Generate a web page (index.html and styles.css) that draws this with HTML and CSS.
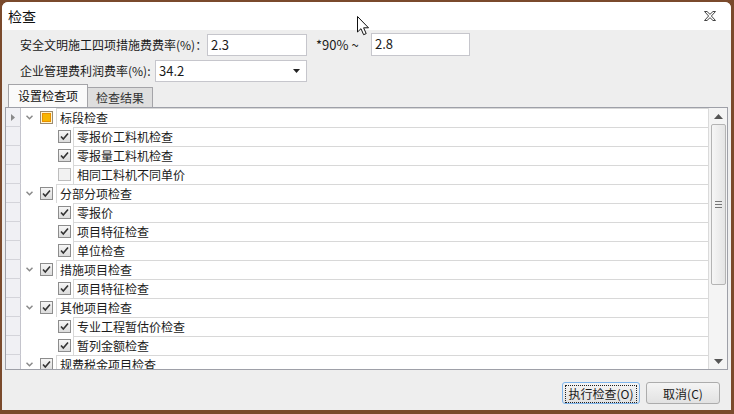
FILE: index.html
```html
<!DOCTYPE html>
<html lang="zh">
<head>
  <meta charset="UTF-8">
  <title>检查</title>
  <link rel="stylesheet" href="styles.css">
</head>
<body>
  <div class="window">
    <div class="titlebar">
      <span class="title">检查</span>
      <svg class="close" width="12" height="10" viewBox="0 0 12 10"><polygon points="0.5,0.5 3,0.5 6,3.3 9,0.5 11.5,0.5 7.4,5 11.5,9.5 9,9.5 6,6.7 3,9.5 0.5,9.5 4.6,5" fill="#fff" stroke="#444"/></svg>
    </div>

    <div class="form">
      <div class="form-row first">
        <label class="lbl lbl-a">安全文明施工四项措施费费率(%)：</label>
        <div class="input w100">2.3</div>
        <span class="mult">*90% ~</span>
        <div class="input w99 tall">2.8</div>
      </div>
      <div class="form-row">
        <label class="lbl lbl-b">企业管理费利润费率(%):</label>
        <div class="input combo">34.2<svg class="drop" width="7" height="4" viewBox="0 0 7 4"><polygon points="0,0 7,0 3.5,4" fill="#222"/></svg></div>
      </div>
    </div>

    <div class="tabs">
      <div class="tab active">设置检查项</div>
      <div class="tab">检查结果</div>
    </div>

    <div class="grid">
      <div class="rows">
        <div class="row parent"><div class="rh"><svg width="4" height="7" viewBox="0 0 4 7"><polygon points="0,0 4,3.5 0,7" fill="#8a8a8a"/></svg></div><div class="lead"><svg class="chev" width="7" height="5" viewBox="0 0 7 5"><polyline points="0.5,0.8 3.5,3.8 6.5,0.8" fill="none" stroke="#8a8a8a" stroke-width="1.5"/></svg><span class="cb mixed"><i></i></span></div><div class="cell">标段检查</div></div>
        <div class="row child"><div class="rh"></div><div class="lead"><span class="cb on"><svg width="11" height="11" viewBox="0 0 11 11"><polyline points="2,5.5 4.3,8 9,2.5" fill="none" stroke="#333" stroke-width="1.6"/></svg></span></div><div class="cell">零报价工料机检查</div></div>
        <div class="row child"><div class="rh"></div><div class="lead"><span class="cb on"><svg width="11" height="11" viewBox="0 0 11 11"><polyline points="2,5.5 4.3,8 9,2.5" fill="none" stroke="#333" stroke-width="1.6"/></svg></span></div><div class="cell">零报量工料机检查</div></div>
        <div class="row child"><div class="rh"></div><div class="lead"><span class="cb off"></span></div><div class="cell">相同工料机不同单价</div></div>
        <div class="row parent"><div class="rh"></div><div class="lead"><svg class="chev" width="7" height="5" viewBox="0 0 7 5"><polyline points="0.5,0.8 3.5,3.8 6.5,0.8" fill="none" stroke="#8a8a8a" stroke-width="1.5"/></svg><span class="cb on"><svg width="11" height="11" viewBox="0 0 11 11"><polyline points="2,5.5 4.3,8 9,2.5" fill="none" stroke="#333" stroke-width="1.6"/></svg></span></div><div class="cell">分部分项检查</div></div>
        <div class="row child"><div class="rh"></div><div class="lead"><span class="cb on"><svg width="11" height="11" viewBox="0 0 11 11"><polyline points="2,5.5 4.3,8 9,2.5" fill="none" stroke="#333" stroke-width="1.6"/></svg></span></div><div class="cell">零报价</div></div>
        <div class="row child"><div class="rh"></div><div class="lead"><span class="cb on"><svg width="11" height="11" viewBox="0 0 11 11"><polyline points="2,5.5 4.3,8 9,2.5" fill="none" stroke="#333" stroke-width="1.6"/></svg></span></div><div class="cell">项目特征检查</div></div>
        <div class="row child"><div class="rh"></div><div class="lead"><span class="cb on"><svg width="11" height="11" viewBox="0 0 11 11"><polyline points="2,5.5 4.3,8 9,2.5" fill="none" stroke="#333" stroke-width="1.6"/></svg></span></div><div class="cell">单位检查</div></div>
        <div class="row parent"><div class="rh"></div><div class="lead"><svg class="chev" width="7" height="5" viewBox="0 0 7 5"><polyline points="0.5,0.8 3.5,3.8 6.5,0.8" fill="none" stroke="#8a8a8a" stroke-width="1.5"/></svg><span class="cb on"><svg width="11" height="11" viewBox="0 0 11 11"><polyline points="2,5.5 4.3,8 9,2.5" fill="none" stroke="#333" stroke-width="1.6"/></svg></span></div><div class="cell">措施项目检查</div></div>
        <div class="row child"><div class="rh"></div><div class="lead"><span class="cb on"><svg width="11" height="11" viewBox="0 0 11 11"><polyline points="2,5.5 4.3,8 9,2.5" fill="none" stroke="#333" stroke-width="1.6"/></svg></span></div><div class="cell">项目特征检查</div></div>
        <div class="row parent"><div class="rh"></div><div class="lead"><svg class="chev" width="7" height="5" viewBox="0 0 7 5"><polyline points="0.5,0.8 3.5,3.8 6.5,0.8" fill="none" stroke="#8a8a8a" stroke-width="1.5"/></svg><span class="cb on"><svg width="11" height="11" viewBox="0 0 11 11"><polyline points="2,5.5 4.3,8 9,2.5" fill="none" stroke="#333" stroke-width="1.6"/></svg></span></div><div class="cell">其他项目检查</div></div>
        <div class="row child"><div class="rh"></div><div class="lead"><span class="cb on"><svg width="11" height="11" viewBox="0 0 11 11"><polyline points="2,5.5 4.3,8 9,2.5" fill="none" stroke="#333" stroke-width="1.6"/></svg></span></div><div class="cell">专业工程暂估价检查</div></div>
        <div class="row child"><div class="rh"></div><div class="lead"><span class="cb on"><svg width="11" height="11" viewBox="0 0 11 11"><polyline points="2,5.5 4.3,8 9,2.5" fill="none" stroke="#333" stroke-width="1.6"/></svg></span></div><div class="cell">暂列金额检查</div></div>
        <div class="row parent"><div class="rh"></div><div class="lead"><svg class="chev" width="7" height="5" viewBox="0 0 7 5"><polyline points="0.5,0.8 3.5,3.8 6.5,0.8" fill="none" stroke="#8a8a8a" stroke-width="1.5"/></svg><span class="cb on"><svg width="11" height="11" viewBox="0 0 11 11"><polyline points="2,5.5 4.3,8 9,2.5" fill="none" stroke="#333" stroke-width="1.6"/></svg></span></div><div class="cell">规费税金项目检查</div></div>
      </div>
      <div class="scrollbar">
        <svg class="arrow" width="9" height="5" viewBox="0 0 9 5"><polygon points="0,5 9,5 4.5,0" fill="#555"/></svg>
        <div class="thumb"><span class="grip"></span></div>
        <div class="track"></div>
        <svg class="arrow" width="9" height="5" viewBox="0 0 9 5"><polygon points="0,0 9,0 4.5,5" fill="#555"/></svg>
      </div>
    </div>

    <div class="footer">
      <button class="btn default"><span>执行检查(O)</span></button>
      <button class="btn">取消(C)</button>
    </div>
  </div>

  <svg class="cursor" width="13" height="20" viewBox="0 0 13 20"><path d="M0.5 0.5 L0.5 16 L4 12.7 L6.6 18.7 L9.2 17.6 L6.6 11.8 L11.5 11.8 Z" fill="#fff" stroke="#111"/></svg>
</body>
</html>
```

FILE: styles.css
```css
html, body { margin: 0; padding: 0; }
body { background: #7a4a2c; padding: 2px 3px 4px 2px; height: 414px; box-sizing: border-box; font-family: "Noto Sans CJK SC", "Microsoft YaHei", sans-serif; font-size: 12px; color: #1a1a1a; position: relative; white-space: nowrap; }
.window { background: #eeeeee; height: 408px; border-radius: 6px 6px 0 0; overflow: hidden; display: flex; flex-direction: column; }

.titlebar { height: 28px; background: #fff; display: flex; align-items: center; justify-content: space-between; padding: 0 15px 0 6px; flex-shrink: 0; }
.title { font-size: 14px; color: #111; }

.form { padding: 3px 0 0 18px; }
.form-row { display: flex; align-items: center; height: 23px; }
.form-row + .form-row { margin-top: 3px; }
.lbl { flex-shrink: 0; }
.lbl-a { width: 187px; }
.lbl-b { width: 135px; }
.input { height: 22px; box-sizing: border-box; border: 1px solid #c6c6cc; background: #fff; padding: 0 3px; line-height: 20px; font-size: 13px; flex-shrink: 0; }
.w100 { width: 100px; }
.w99 { width: 99px; }
.tall { height: 23px; }
.mult { margin-left: 9px; width: 55px; font-size: 13px; flex-shrink: 0; }
.combo { width: 152px; display: flex; align-items: center; justify-content: space-between; padding-right: 6px; }

.tabs { display: flex; align-items: flex-end; margin: 2px 0 0 6px; height: 23px; }
.tab { height: 20px; line-height: 19px; width: 66px; text-align: center; border: 1px solid #a4a4a8; border-bottom: none; background: #dedede; box-sizing: border-box; color: #333; }
.tab.active { height: 23px; line-height: 22px; background: #fafafa; width: 80px; color: #111; }
.tab + .tab { margin-left: -1px; }

.grid { margin: 0 3px; height: 263px; border: 1px solid #9ea0a8; background: #fff; display: flex; box-sizing: border-box; flex-shrink: 0; }
.rows { flex: 1; overflow: hidden; }
.row { display: flex; height: 19px; }
.rh { width: 15px; flex-shrink: 0; background: #f0f0f4; border-right: 1px solid #c4c4cc; border-bottom: 1px solid #d4d4da; box-sizing: border-box; display: flex; align-items: center; justify-content: center; }
.lead { display: flex; align-items: center; flex-shrink: 0; }
.parent .lead { width: 35px; }
.child .lead { width: 52px; }
.chev { margin-left: 5px; }
.parent .cb { margin-left: 7px; }
.child .cb { margin-left: 37px; }
.cell { flex: 1; border-left: 1px solid #d8d8d8; border-top: 1px solid #d8d8d8; padding-left: 3px; line-height: 18px; font-size: 12px; overflow: hidden; }
.cb { width: 13px; height: 13px; box-sizing: border-box; border: 1px solid #8c8c8c; background: linear-gradient(#f6f6f6, #dcdcdc); display: flex; align-items: center; justify-content: center; }
.cb.off { border-color: #bdbdbd; background: #f2f2f2; }
.cb.mixed { border-color: #9a8a70; background: #fff4d0; }
.cb.mixed i { width: 7px; height: 7px; background: #f7b500; border: 1px solid #e89000; }

.scrollbar { width: 18px; flex-shrink: 0; border-left: 1px solid #dadada; background: #f4f4f4; display: flex; flex-direction: column; align-items: center; }
.arrow { margin: 6px 0 5px; }
.thumb { width: 15px; height: 161px; box-sizing: border-box; border: 1px solid #b4b4b4; border-radius: 2px; background: linear-gradient(90deg, #f6f6f6, #e4e4e4); display: flex; align-items: center; justify-content: center; }
.grip { width: 7px; height: 5px; border-top: 1px solid #777; border-bottom: 1px solid #777; position: relative; }
.grip::after { content: ""; position: absolute; left: 0; right: 0; top: 2px; border-top: 1px solid #777; }
.track { flex: 1; }

.footer { display: flex; justify-content: flex-end; gap: 6px; padding: 12px 11px 0 0; }
.btn { height: 22px; font-family: inherit; font-size: 12px; color: #1a1a1a; border: 1px solid #acacac; border-radius: 3px; background: linear-gradient(#f4f4f4, #e2e2e2); padding: 0; width: 74px; }
.btn.default { width: 78px; border-color: #7eb4ea; padding: 2px; }
.btn.default span { display: block; height: 16px; line-height: 15px; border: 1px dotted #222; }

.cursor { position: absolute; left: 357px; top: 16px; }
```
